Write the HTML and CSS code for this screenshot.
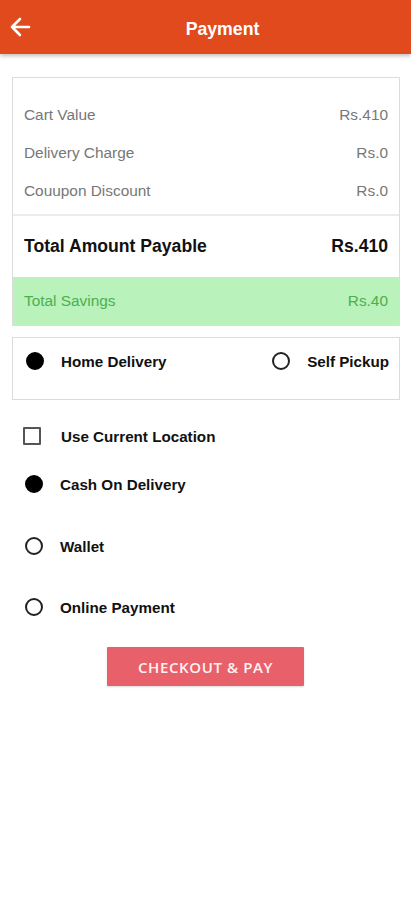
FILE: index.html
```html
<!DOCTYPE html>
<html>
<head>
<meta charset="utf-8">
<link rel="stylesheet" href="styles.css">
</head>
<body>
<header class="topbar">
  <svg class="back" width="22" height="20" viewBox="0 0 22 20"><path d="M20 10H3M11 2L3 10l8 8" fill="none" stroke="#fff" stroke-width="2.6" stroke-linecap="round" stroke-linejoin="round"/></svg>
  <div class="title">Payment</div>
</header>
<main class="content">
  <section class="card summary">
    <div class="rows">
      <div class="row"><span>Cart Value</span><span>Rs.410</span></div>
      <div class="row"><span>Delivery Charge</span><span>Rs.0</span></div>
      <div class="row"><span>Couupon Discount</span><span>Rs.0</span></div>
    </div>
    <div class="total"><span>Total Amount Payable</span><span>Rs.410</span></div>
    <div class="savings"><span>Total Savings</span><span>Rs.40</span></div>
  </section>
  <section class="card delivery">
    <div class="opt"><span class="radio on"></span><span class="lbl">Home Delivery</span></div>
    <div class="opt"><span class="radio"></span><span class="lbl">Self Pickup</span></div>
  </section>
  <div class="check"><span class="box"></span><span class="lbl">Use Current Location</span></div>
  <div class="pay first"><span class="radio on"></span><span class="lbl">Cash On Delivery</span></div>
  <div class="pay second"><span class="radio"></span><span class="lbl">Wallet</span></div>
  <div class="pay"><span class="radio"></span><span class="lbl">Online Payment</span></div>
  <div class="btnwrap"><button class="btn">CHECKOUT &amp; PAY</button></div>
</main>
</body>
</html>
```
FILE: styles.css
```css
* { box-sizing: border-box; }
body { margin: 0; background: #fff; font-family: "Liberation Sans", Arial, sans-serif; width: 411px; height: 900px; overflow: hidden; }
.topbar { height: 54px; background: #e04a1c; display: flex; align-items: center; position: relative; box-shadow: 0 2px 4px rgba(0,0,0,0.25); }
.back { position: absolute; left: 9px; top: 17px; }
.title { flex: 1; text-align: center; color: #fff; font-weight: bold; font-size: 17.7px; padding-left: 34px; padding-top: 4px; }
.content { padding: 23px 11px 0 12px; }
.card { border: 1px solid #dcdcdc; }
.rows { padding: 18px 11px 4px 11px; }
.row { display: flex; justify-content: space-between; color: #777; font-size: 15.4px; height: 38px; align-items: center; }
.total { border-top: 2px solid #ececec; display: flex; justify-content: space-between; align-items: center; height: 63px; padding: 0 11px; font-weight: bold; font-size: 17.6px; color: #111; }
.savings { background: #b9f2ba; color: #4caf50; display: flex; justify-content: space-between; align-items: center; height: 48px; padding: 0 11px; font-size: 15.4px; }
.delivery { margin-top: 11px; height: 63px; display: flex; justify-content: space-between; padding: 14px 10px 0 13px; align-items: flex-start; }
.opt { display: flex; align-items: center; }
.radio { width: 18px; height: 18px; border-radius: 50%; border: 2px solid #222; display: inline-block; flex: none; }
.radio.on { background: #000; border-color: #000; }
.lbl { font-weight: bold; font-size: 15.2px; color: #111; margin-left: 18px; }
.opt .lbl { margin-left: 17px; }
.check { display: flex; align-items: center; margin-top: 27px; padding-left: 11px; }
.box { width: 18px; height: 18px; border: 2px solid #555; border-radius: 1px; flex: none; }
.check .lbl { margin-left: 20px; }
.pay { display: flex; align-items: center; padding-left: 13px; margin-top: 43px; }
.pay.first { margin-top: 30px; }
.pay.second { margin-top: 44px; }
.pay .lbl { margin-left: 17px; }
.btnwrap { display: flex; justify-content: center; margin-top: 31px; }
.btn { width: 197px; height: 39px; background: #e8606a; border: none; border-radius: 1px; color: #fff2f2; font-family: "Open Sans", "Noto Sans", sans-serif; font-weight: 600; font-size: 15px; letter-spacing: 0.6px; box-shadow: 0 1px 2px rgba(0,0,0,0.15); margin-right: 1px; }
```
